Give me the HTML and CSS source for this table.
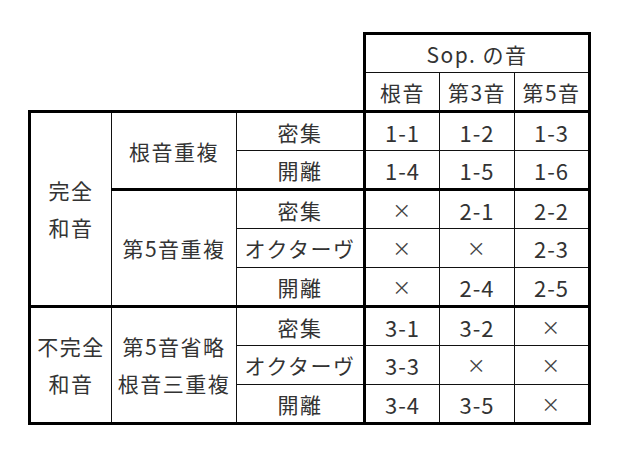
FILE: index.html
```html
<!DOCTYPE html>
<html lang="ja">
<head>
<meta charset="utf-8">
<link rel="stylesheet" href="styles.css">
</head>
<body>
<table class="chart">
  <colgroup>
    <col class="c1"><col class="c2"><col class="c3"><col class="c4"><col class="c5"><col class="c6">
  </colgroup>
  <tr>
    <td class="blank" colspan="3" rowspan="2"></td>
    <td class="thick-l thick-t thick-r" colspan="3">Sop. の音</td>
  </tr>
  <tr>
    <td class="thick-l">根音</td>
    <td>第3音</td>
    <td class="thick-r">第5音</td>
  </tr>
  <tr class="thick-top">
    <td class="thick-l two" rowspan="5">完全<br>和音</td>
    <td rowspan="2">根音重複</td>
    <td>密集</td>
    <td class="thick-l num">1-1</td><td class="num">1-2</td><td class="thick-r num">1-3</td>
  </tr>
  <tr>
    <td>開離</td>
    <td class="thick-l num">1-4</td><td class="num">1-5</td><td class="thick-r num">1-6</td>
  </tr>
  <tr class="thick-top">
    <td rowspan="3">第5音重複</td>
    <td>密集</td>
    <td class="thick-l x">×</td><td class="num">2-1</td><td class="thick-r num">2-2</td>
  </tr>
  <tr>
    <td>オクターヴ</td>
    <td class="thick-l x">×</td><td class="x">×</td><td class="thick-r num">2-3</td>
  </tr>
  <tr>
    <td>開離</td>
    <td class="thick-l x">×</td><td class="num">2-4</td><td class="thick-r num">2-5</td>
  </tr>
  <tr class="thick-top">
    <td class="thick-l thick-b two" rowspan="3">不完全<br>和音</td>
    <td class="thick-b two" rowspan="3">第5音省略<br>根音三重複</td>
    <td>密集</td>
    <td class="thick-l num">3-1</td><td class="num">3-2</td><td class="thick-r x">×</td>
  </tr>
  <tr>
    <td>オクターヴ</td>
    <td class="thick-l num">3-3</td><td class="x">×</td><td class="thick-r x">×</td>
  </tr>
  <tr class="last">
    <td>開離</td>
    <td class="thick-l num">3-4</td><td class="num">3-5</td><td class="thick-r x">×</td>
  </tr>
</table>
</body>
</html>
```

FILE: styles.css
```css
html, body {
  margin: 0;
  padding: 0;
  background: #ffffff;
}

body {
  padding: 32px 0 0 28px;
  font-family: "Noto Sans CJK JP", "Noto Sans", sans-serif;
  color: #333333;
}

.chart {
  border-collapse: collapse;
  table-layout: fixed;
  font-size: 21px;
  letter-spacing: 1.5px;
}

.c1 { width: 82px; }
.c2 { width: 125px; }
.c3 { width: 128px; }
.c4 { width: 75px; }
.c5 { width: 75px; }
.c6 { width: 75px; }

.chart tr { height: 39px; }

.chart td {
  border: 1px solid #111111;
  padding: 0;
  text-align: center;
  vertical-align: middle;
  line-height: 24px;
  white-space: nowrap;
}

.chart td.blank {
  border: none;
}

.chart td.two {
  line-height: 37px;
}

.chart td.num {
  font-size: 22px;
  letter-spacing: 1px;
}

.chart td.x {
  font-size: 19px;
  color: #444444;
}

.chart td.thick-l { border-left: 3px solid #000000; }
.chart td.thick-r { border-right: 3px solid #000000; }
.chart td.thick-t { border-top: 3px solid #000000; }
.chart td.thick-b { border-bottom: 3px solid #000000; }
.chart tr.thick-top td { border-top: 3px solid #000000; }
.chart tr.last td { border-bottom: 3px solid #000000; }
```
